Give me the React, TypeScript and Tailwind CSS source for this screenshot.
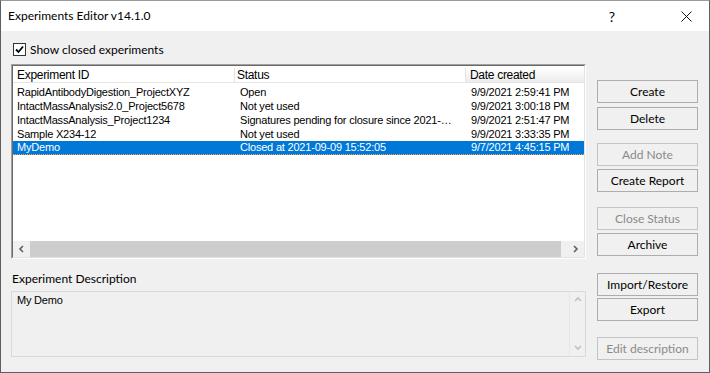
import React from "react";

const rows = [
  { id: "RapidAntibodyDigestion_ProjectXYZ", status: "Open", date: "9/9/2021 2:59:41 PM" },
  { id: "IntactMassAnalysis2.0_Project5678", status: "Not yet used", date: "9/9/2021 3:00:18 PM" },
  { id: "IntactMassAnalysis_Project1234", status: "Signatures pending for closure since 2021-…", date: "9/9/2021 2:51:47 PM" },
  { id: "Sample X234-12", status: "Not yet used", date: "9/9/2021 3:33:35 PM" },
  { id: "MyDemo", status: "Closed at 2021-09-09 15:52:05", date: "9/7/2021 4:45:15 PM", selected: true },
];

const buttons = [
  { label: "Create", mt: "mt-[49px]" },
  { label: "Delete", mt: "mt-[4px]" },
  { label: "Add Note", mt: "mt-[13px]", disabled: true },
  { label: "Create Report", mt: "mt-[3px]" },
  { label: "Close Status", mt: "mt-[15px]", disabled: true },
  { label: "Archive", mt: "mt-[3px]" },
  { label: "Import/Restore", mt: "mt-[17px]" },
  { label: "Export", mt: "mt-[2px]" },
  { label: "Edit description", mt: "mt-[16px]", disabled: true },
];

function Chevron({ dir, color }: { dir: "left" | "right" | "up" | "down"; color: string }) {
  const d = {
    left: "M5 1 L2 4 L5 7",
    right: "M2 1 L5 4 L2 7",
    up: "M1 5 L4 2 L7 5",
    down: "M1 2 L4 5 L7 2",
  }[dir];
  return (
    <svg width="8" height="8" viewBox="0 0 8 8">
      <path d={d} fill="none" stroke={color} strokeWidth="1.6" />
    </svg>
  );
}

export default function App() {
  return (
    <div
      className="w-[710px] h-[373px] bg-[#f0f0f0] border border-[#5f5f5f] border-t-[#9a9a9a] flex flex-col text-black overflow-hidden"
      style={{ fontFamily: "Lato, 'Noto Sans', sans-serif" }}
    >
      {/* title bar */}
      <div className="h-[30px] bg-white flex items-center text-[12px] shrink-0">
        <span className="pl-[7px]">Experiments Editor v14.1.0</span>
        <span className="ml-auto w-[46px] text-center text-[14px] mr-[28px]">?</span>
        <div className="w-[46px] h-[30px] flex items-center justify-center">
          <svg width="11" height="11" viewBox="0 0 11 11">
            <path d="M0.5 0.5 L10.5 10.5 M10.5 0.5 L0.5 10.5" stroke="#111" strokeWidth="1" />
          </svg>
        </div>
      </div>

      <div className="flex flex-1 pl-[10px]">
        {/* left column */}
        <div className="w-[575px] flex flex-col">
          <div className="mt-[12px] h-[13px] flex items-center">
            <div className="ml-[2px] w-[13px] h-[13px] border border-[#333] bg-white flex items-center justify-center">
              <svg width="9" height="9" viewBox="0 0 9 9">
                <path d="M1 4.5 L3.5 7 L8 1.5" fill="none" stroke="#000" strokeWidth="1.8" />
              </svg>
            </div>
            <span className="ml-[4px] text-[12px]">Show closed experiments</span>
          </div>

          {/* list view */}
          <div className="mt-[8px] h-[195px] border border-t-[#a0a0a0] border-l-[#a0a0a0] border-b-white border-r-white">
            <div
              className="h-full border border-t-[#696969] border-l-[#696969] border-b-[#e3e3e3] border-r-[#e3e3e3] bg-white flex flex-col text-[11px] tracking-[-0.2px] overflow-hidden"
              style={{ fontFamily: "'Liberation Sans', Arial, sans-serif" }}
            >
              <div className="h-[17px] flex border-b border-[#e5e5e5] shrink-0 pt-[2px]">
                <div className="w-[222px] pl-[4px] border-r border-[#e5e5e5] flex items-center text-[12px] tracking-[-0.3px]">
                  Experiment ID
                </div>
                <div className="w-[231px] pl-[2px] border-r border-[#e5e5e5] flex items-center text-[12px] tracking-[-0.3px]">
                  Status
                </div>
                <div className="flex-1 pl-[4px] flex items-center text-[12px] tracking-[-0.3px] bg-gradient-to-b from-white to-[#ececec]">
                  Date created
                </div>
              </div>
              <div className="flex-1 pt-[2px]">
                {rows.map((r) => (
                  <div
                    key={r.id}
                    className={
                      r.selected
                        ? "h-[14px] flex items-center bg-[#0078d7] text-white border-b border-dotted border-[#f7a24a]"
                        : "h-[14px] flex items-center"
                    }
                  >
                    <div className="w-[222px] pl-[4px] whitespace-nowrap">{r.id}</div>
                    <div className="w-[231px] pl-[5px] whitespace-nowrap">{r.status}</div>
                    <div className="flex-1 pl-[5px] whitespace-nowrap">{r.date}</div>
                  </div>
                ))}
              </div>
              <div className="h-[16px] flex bg-[#f0f0f0] shrink-0">
                <div className="w-[17px] flex items-center justify-center">
                  <Chevron dir="left" color="#606060" />
                </div>
                <div className="w-[531px] bg-[#cdcdcd]" />
                <div className="flex-1" />
                <div className="w-[17px] flex items-center justify-center">
                  <Chevron dir="right" color="#606060" />
                </div>
              </div>
            </div>
          </div>

          <div className="mt-[12px] h-[16px] flex items-center text-[12px] pl-[1px]">Experiment Description</div>

          {/* description box */}
          <div className="mt-[4px] h-[66px] border border-[#d9d9d9] flex">
            <div
              className="flex-1 pl-[5px] text-[11px] tracking-[-0.2px]"
              style={{ fontFamily: "'Liberation Sans', Arial, sans-serif" }}
            >
              My Demo
            </div>
            <div className="w-[16px] border-l border-[#e6e6e6] flex flex-col items-center justify-between py-[4px]">
              <Chevron dir="up" color="#c0c0c0" />
              <Chevron dir="down" color="#c0c0c0" />
            </div>
          </div>
        </div>

        {/* right column buttons */}
        <div className="ml-[11px] w-[101px] flex flex-col">
          {buttons.map((b) => (
            <div
              key={b.label}
              className={
                b.disabled
                  ? `${b.mt} h-[23px] border border-[#c4c4c4] flex items-center justify-center text-[12px] text-[#8a8a8a]`
                  : `${b.mt} h-[23px] border border-[#adadad] flex items-center justify-center text-[12px]`
              }
            >
              {b.label}
            </div>
          ))}
        </div>
      </div>
    </div>
  );
}
